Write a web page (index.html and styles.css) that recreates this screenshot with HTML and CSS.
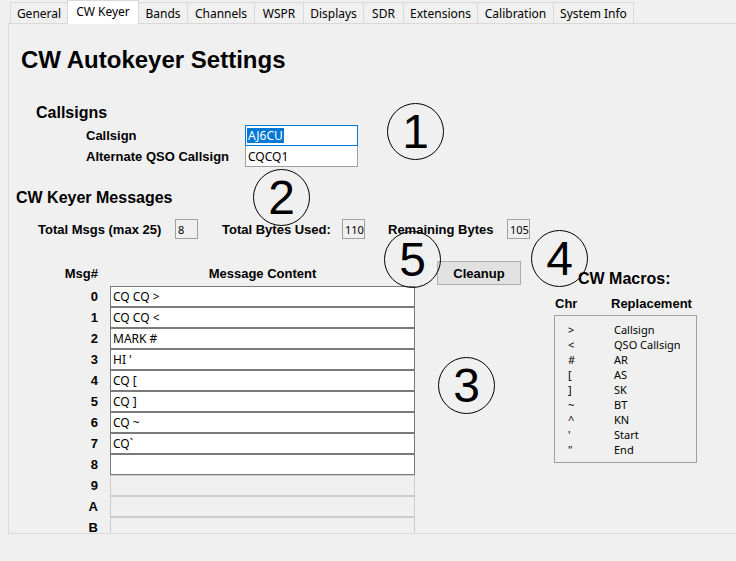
FILE: index.html
```html
<!DOCTYPE html>
<html>
<head>
<meta charset="utf-8">
<link rel="stylesheet" href="styles.css">
</head>
<body>
<div class="tabs">
  <div class="tab t-general">General</div>
  <div class="tab t-cw active">CW Keyer</div>
  <div class="tab t-bands">Bands</div>
  <div class="tab t-channels">Channels</div>
  <div class="tab t-wspr">WSPR</div>
  <div class="tab t-displays">Displays</div>
  <div class="tab t-sdr">SDR</div>
  <div class="tab t-ext">Extensions</div>
  <div class="tab t-cal">Calibration</div>
  <div class="tab t-sys">System Info</div>
</div>
<div class="panel">
  <h1 class="title">CW Autokeyer Settings</h1>
  <h2 class="section callsigns-h">Callsigns</h2>
  <div class="callform">
    <div class="lbl">Callsign</div>
    <div class="field focused"><span class="sel">AJ6CU</span></div>
    <div class="lbl">Alternate QSO Callsign</div>
    <div class="field second">CQCQ1</div>
  </div>
  <h2 class="section msgs-h">CW Keyer Messages</h2>
  <div class="stats">
    <div class="stat-lbl w1">Total Msgs (max 25)</div>
    <div class="stat-box">8</div>
    <div class="stat-lbl w2">Total Bytes Used:</div>
    <div class="stat-box">110</div>
    <div class="stat-lbl w3">Remaining Bytes</div>
    <div class="stat-box">105</div>
  </div>
  <div class="msgarea">
    <div class="msgtable">
      <div class="hd num">Msg#</div>
      <div class="hd content">Message Content</div>
      <div class="num">0</div><div class="msg">CQ CQ &gt;</div>
      <div class="num">1</div><div class="msg">CQ CQ &lt;</div>
      <div class="num">2</div><div class="msg">MARK #</div>
      <div class="num">3</div><div class="msg">HI '</div>
      <div class="num">4</div><div class="msg">CQ [</div>
      <div class="num">5</div><div class="msg">CQ ]</div>
      <div class="num">6</div><div class="msg">CQ ~</div>
      <div class="num">7</div><div class="msg">CQ`</div>
      <div class="num">8</div><div class="msg"></div>
      <div class="num">9</div><div class="msg off"></div>
      <div class="num">A</div><div class="msg off"></div>
      <div class="num">B</div><div class="msg off"></div>
    </div>
    <div class="cleanup">Cleanup</div>
    <div class="macros">
      <div class="macros-title">CW Macros:</div>
      <div class="macros-head"><span class="h-chr">Chr</span><span>Replacement</span></div>
      <div class="macros-box">
        <span>&gt;</span><span>Callsign</span>
        <span>&lt;</span><span>QSO Callsign</span>
        <span>#</span><span>AR</span>
        <span>[</span><span>AS</span>
        <span>]</span><span>SK</span>
        <span>~</span><span>BT</span>
        <span>^</span><span>KN</span>
        <span>'</span><span>Start</span>
        <span>"</span><span>End</span>
      </div>
    </div>
  </div>
</div>
<div class="callout c1">1</div>
<div class="callout c2">2</div>
<div class="callout c3">3</div>
<div class="callout c4">4</div>
<div class="callout c5">5</div>
</body>
</html>
```
FILE: styles.css
```css
html, body {
  margin: 0;
  padding: 0;
}
body {
  background: #f0f0f0;
  width: 736px;
  height: 561px;
  overflow: hidden;
  position: relative;
  font-family: "Liberation Sans", Arial, sans-serif;
  color: #000;
}
.tabs {
  display: flex;
  align-items: flex-end;
  height: 24px;
  padding-left: 10px;
  position: relative;
  z-index: 2;
}
.tab {
  box-sizing: border-box;
  height: 21px;
  margin-bottom: 1px;
  margin-right: -1px;
  border: 1px solid #d9d9d9;
  border-bottom: none;
  background: #f0f0f0;
  font: 12px "Noto Sans", "Open Sans", sans-serif;
  display: flex;
  align-items: center;
  justify-content: center;
  padding-top: 1px;
}
.tab.active {
  height: 24px;
  margin-bottom: 0;
  background: #fff;
  position: relative;
  z-index: 3;
  align-items: flex-start;
  padding-top: 2px;
}
.t-general { width: 58px; }
.t-cw { width: 72px; }
.t-bands { width: 50px; }
.t-channels { width: 68px; }
.t-wspr { width: 50px; }
.t-displays { width: 61px; }
.t-sdr { width: 41px; }
.t-ext { width: 75px; }
.t-cal { width: 77px; }
.t-sys { width: 81px; }

.panel {
  box-sizing: border-box;
  margin-top: -1px;
  margin-left: 8px;
  height: 511px;
  border: 1px solid #d9d9d9;
  border-right: none;
  overflow: hidden;
  position: relative;
  z-index: 1;
}
.title {
  margin: 22px 0 0 12px;
  font-size: 24px;
  line-height: 28px;
  font-weight: 700;
}
.section {
  font-size: 16px;
  line-height: 20px;
  font-weight: 700;
  margin: 0;
}
.callsigns-h {
  margin: 29px 0 0 27px;
}
.callform {
  margin: 2px 0 0 77px;
  display: grid;
  grid-template-columns: 159px 113px;
  grid-auto-rows: 21px;
}
.lbl {
  font-size: 13px;
  font-weight: 700;
  display: flex;
  align-items: center;
}
.field {
  box-sizing: border-box;
  background: #fff;
  border: 1px solid #7a7a7a;
  font: 12px "Noto Sans", "Open Sans", sans-serif;
  display: flex;
  align-items: center;
  padding-left: 2px;
}
.field.focused {
  border-color: #0078d7;
  padding-left: 1px;
}
.field.second {
  border-top: none;
  border-color: #a0a0a0;
}
.sel {
  background: #0078d7;
  color: #fff;
  line-height: 15px;
  padding: 0 1px;
}
.msgs-h {
  margin: 21px 0 0 7px;
}
.stats {
  margin: 11px 0 0 29px;
  display: flex;
  height: 20px;
}
.stat-lbl {
  font-size: 13px;
  font-weight: 700;
  display: flex;
  align-items: center;
}
.w1 { width: 137px; }
.w2 { width: 120px; margin-left: 24px; }
.w3 { width: 119px; margin-left: 23px; }
.stat-box {
  box-sizing: border-box;
  width: 23px;
  height: 20px;
  border: 1px solid #a0a0a0;
  font: 11px "Noto Sans", "Open Sans", sans-serif;
  display: flex;
  align-items: center;
  padding-left: 2px;
}
.msgarea {
  margin-top: 22px;
  display: flex;
  align-items: flex-start;
}
.msgtable {
  display: grid;
  grid-template-columns: 89px 305px;
  grid-template-rows: 25px;
  grid-auto-rows: 21px;
  column-gap: 12px;
}
.num {
  font-size: 13px;
  font-weight: 700;
  display: flex;
  align-items: center;
  justify-content: flex-end;
}
.hd {
  font-size: 13px;
  font-weight: 700;
  display: flex;
  align-items: center;
}
.hd.content {
  justify-content: center;
}
.msg {
  box-sizing: border-box;
  background: #fff;
  border: 1px solid #7a7a7a;
  font: 12px "Noto Sans", "Open Sans", sans-serif;
  display: flex;
  align-items: center;
  padding-left: 2px;
}
.msg.off {
  background: #f0f0f0;
  border-color: #cccccc;
}
.cleanup {
  box-sizing: border-box;
  margin-left: 22px;
  width: 84px;
  height: 24px;
  border: 1px solid #adadad;
  background: #e1e1e1;
  font-size: 13px;
  font-weight: 700;
  display: flex;
  align-items: center;
  justify-content: center;
}
.macros {
  margin-left: 33px;
  width: 143px;
}
.macros-title {
  margin: 8px 0 0 24px;
  font-size: 16px;
  line-height: 20px;
  font-weight: 700;
}
.macros-head {
  margin-top: 7px;
  display: flex;
  font-size: 13px;
  line-height: 16px;
  font-weight: 700;
}
.h-chr {
  margin-left: 1px;
  width: 56px;
}
.macros-box {
  box-sizing: border-box;
  margin-top: 3px;
  height: 148px;
  border: 1px solid #a0a0a0;
  padding: 6px 0 5px 13px;
  display: grid;
  grid-template-columns: 46px auto;
  grid-auto-rows: 15px;
  font: 11px/15px "Noto Sans", "Open Sans", sans-serif;
}
.callout {
  position: absolute;
  box-sizing: border-box;
  width: 57px;
  height: 57px;
  border: 1px solid #000;
  border-radius: 50%;
  display: flex;
  align-items: center;
  justify-content: center;
  font: 48px/1 "Liberation Sans", Arial, sans-serif;
  z-index: 5;
}
.c1 { left: 387px; top: 103px; }
.c2 { left: 253px; top: 169px; }
.c3 { left: 438px; top: 357px; }
.c4 { left: 531px; top: 230px; }
.c5 { left: 384px; top: 231px; }
```
